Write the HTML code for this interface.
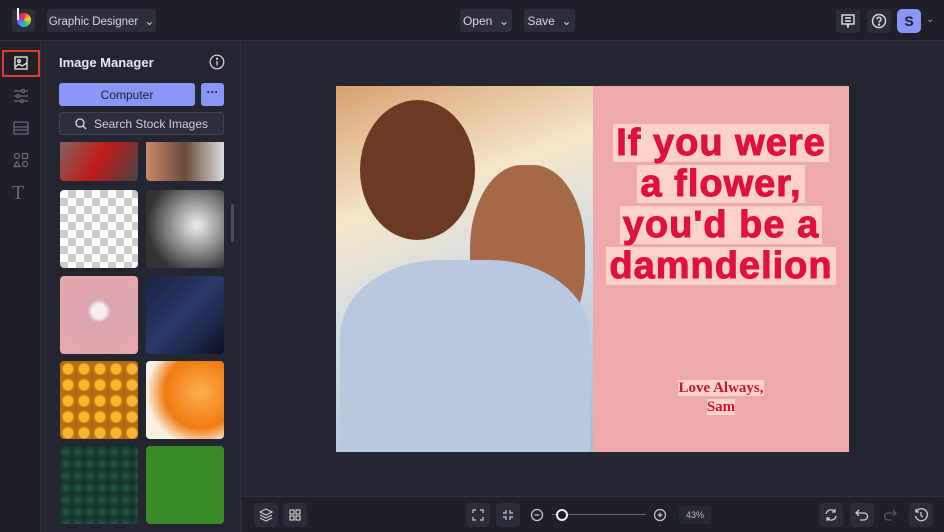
<!DOCTYPE html>
<html><head><style>
*{box-sizing:border-box;margin:0;padding:0}
body{width:944px;height:532px;overflow:hidden;background:#232530;font-family:"Liberation Sans",sans-serif;position:relative;color:#e6e6ea}
.abs{position:absolute}
.btn{position:absolute;background:#2c2e3a;border-radius:4px;font-size:12px;color:#d8d8de;display:flex;align-items:center;justify-content:center;white-space:nowrap}
.th{position:absolute;width:78px;height:78px;border-radius:4px}
.ib{position:absolute;width:24px;height:24px;background:#2a2c37;border-radius:4px;display:flex;align-items:center;justify-content:center}
.hl{background:#fdd3c8;color:#e0113e;font-weight:bold;font-size:38px;letter-spacing:1px;line-height:38px;padding:0 3px;display:inline-block;margin-bottom:3px;-webkit-text-stroke:1px #e0113e}
</style></head><body>
<div class="abs" style="left:0;top:0;width:944px;height:41px;background:#1e1f28;border-bottom:1px solid #2e303b"></div>
<div class="abs" style="left:12px;top:9px;width:23px;height:23px;background:#2c2e3a;border-radius:4px"></div>
<div class="abs" style="left:17px;top:13px;width:14px;height:14px;border-radius:50%;background:conic-gradient(#e33,#fc3,#3c6,#39f,#c3c,#e33)"></div>
<div class="abs" style="left:17px;top:8px;width:2px;height:12px;background:#fff"></div>
<div class="btn" style="left:47px;top:9px;width:109px;height:23px;font-size:11.5px">Graphic Designer&nbsp; ⌄</div>
<div class="btn" style="left:460px;top:9px;width:52px;height:23px">Open &nbsp;⌄</div>
<div class="btn" style="left:524px;top:9px;width:51px;height:23px">Save &nbsp;⌄</div>
<div class="ib" style="left:836px;top:9px"><svg width="14" height="14" viewBox="0 0 14 14" fill="none" stroke="#ddd" stroke-width="1.4"><rect x="1" y="1" width="12" height="9"/><path d="M4 4h6M4 7h6M6 10l1 3 1-3"/></svg></div>
<div class="ib" style="left:867px;top:9px"><svg width="16" height="16" viewBox="0 0 16 16" fill="none" stroke="#ddd" stroke-width="1.4"><circle cx="8" cy="8" r="6.5"/><path d="M6 6.3a2 2 0 1 1 2.5 2c-.5.2-.5.7-.5 1.3"/><circle cx="8" cy="11.6" r=".5" fill="#ddd"/></svg></div>
<div class="abs" style="left:897px;top:9px;width:24px;height:24px;background:#8b95f5;border-radius:5px;color:#1b1d2a;font-weight:bold;font-size:14px;display:flex;align-items:center;justify-content:center">S</div>
<div class="abs" style="left:926px;top:14px;font-size:10px;color:#aaa">⌄</div>

<div class="abs" style="left:0;top:42px;width:41px;height:490px;background:#1e1f28;border-right:1px solid #2e303b"></div>
<div class="abs" style="left:2px;top:50px;width:38px;height:27px;border:2px solid #e23a2a"></div>
<svg class="abs" style="left:14px;top:56px" width="14" height="14" viewBox="0 0 14 14" fill="none" stroke="#eee" stroke-width="1.3"><rect x="1" y="1" width="12" height="12"/><circle cx="5" cy="5" r="1.3"/><path d="M1 11l4-3 3 2 5-3"/></svg>
<svg class="abs" style="left:13px;top:88px" width="16" height="16" viewBox="0 0 16 16" fill="none" stroke="#666a78" stroke-width="1.2"><path d="M1 3h14M1 8h14M1 13h14"/><circle cx="10" cy="3" r="1.5" fill="#1e1f28"/><circle cx="5" cy="8" r="1.5" fill="#1e1f28"/><circle cx="9" cy="13" r="1.5" fill="#1e1f28"/></svg>
<svg class="abs" style="left:13px;top:120px" width="16" height="16" viewBox="0 0 16 16" fill="none" stroke="#666a78" stroke-width="1.2"><rect x="1" y="2" width="14" height="12"/><path d="M1 7h14M1 10h14"/></svg>
<svg class="abs" style="left:13px;top:152px" width="16" height="16" viewBox="0 0 16 16" fill="none" stroke="#666a78" stroke-width="1.2"><circle cx="4" cy="4" r="2.5"/><rect x="9.5" y="1.5" width="5" height="5"/><path d="M4 9.5l3 5H1z"/><circle cx="12" cy="12" r="2.5"/></svg>
<div class="abs" style="left:12px;top:182px;font-size:20px;color:#666a78;font-family:'Liberation Serif',serif">T</div>

<div class="abs" style="left:42px;top:42px;width:199px;height:490px;background:#232530;border-right:1px solid #2e303b"></div>
<div class="abs" style="left:59px;top:55px;font-size:13px;font-weight:bold;color:#e8e8ee">Image Manager</div>
<svg class="abs" style="left:209px;top:54px" width="16" height="16" viewBox="0 0 16 16" fill="none" stroke="#ddd" stroke-width="1.2"><circle cx="8" cy="8" r="6.8"/><path d="M8 7v4.5"/><circle cx="8" cy="4.7" r=".5" fill="#ddd"/></svg>
<div class="abs" style="left:59px;top:83px;width:136px;height:23px;background:#8b95f5;border-radius:3px;color:#1b1d3a;font-size:12px;display:flex;align-items:center;justify-content:center">Computer</div>
<div class="abs" style="left:201px;top:83px;width:23px;height:23px;background:#8b95f5;border-radius:3px;color:#1b1d3a;font-size:12px;font-weight:bold;text-align:center;line-height:18px">···</div>
<div class="abs" style="left:59px;top:112px;width:165px;height:23px;background:#2c2e3a;border:1px solid #42444f;border-radius:3px;font-size:12px;color:#cfd0d6;display:flex;align-items:center;justify-content:center"><svg width="12" height="12" viewBox="0 0 12 12" fill="none" stroke="#ddd" stroke-width="1.3" style="margin-right:7px"><circle cx="5" cy="5" r="4"/><path d="M8 8l3 3"/></svg>Search Stock Images</div>
<div class="abs" style="left:42px;top:142px;width:190px;height:390px;overflow:hidden">
<div class="th" style="left:18px;top:-4px;height:43px;background:linear-gradient(120deg,#7a6a60,#c21a1a 50%,#444)"></div>
<div class="th" style="left:104px;top:-4px;height:43px;background:linear-gradient(90deg,#c88a68,#6a4a3a,#ddd)"></div>
<div class="th" style="left:18px;top:48px;background:repeating-conic-gradient(#ccc 0 25%,#fff 0 50%) 0 0/16px 16px"></div>
<div class="th" style="left:104px;top:48px;background:radial-gradient(circle at 65% 45%,#eee,#999 35%,#333 75%)"></div>
<div class="th" style="left:18px;top:134px;background:radial-gradient(circle at 50% 45%,#f4f0f0 12%,#dba6b0 20%,#e8a6ae)"></div>
<div class="th" style="left:104px;top:134px;background:linear-gradient(135deg,#1a2040,#2a3a6a 50%,#0c1020)"></div>
<div class="th" style="left:18px;top:219px;background:radial-gradient(circle,#f6b830 40%,#b86a10 60%) 0 0/16px 16px"></div>
<div class="th" style="left:104px;top:219px;background:radial-gradient(circle at 70% 40%,#ffb050,#f07a10 50%,#f8f0e0 75%)"></div>
<div class="th" style="left:18px;top:304px;background:radial-gradient(circle,#2a5a4a,#0e2a22) 0 0/12px 12px"></div>
<div class="th" style="left:104px;top:304px;background:#3a8a2a"></div>
</div>
<div class="abs" style="left:231px;top:204px;width:3px;height:38px;background:#4a4c58;border-radius:2px"></div>

<div class="abs" style="left:336px;top:86px;width:257px;height:366px;overflow:hidden;background:linear-gradient(160deg,#d8a070 0%,#f5e6c8 30%,#d2dce8 55%,#a8b8d0 100%)">
<div class="abs" style="left:24px;top:14px;width:115px;height:140px;border-radius:50%;background:#6a3a22"></div>
<div class="abs" style="left:134px;top:79px;width:115px;height:185px;border-radius:45%;background:#a46a48"></div>
<div class="abs" style="left:4px;top:174px;width:250px;height:192px;border-radius:40% 40% 0 0;background:#b8c8de"></div>
</div>
<div class="abs" style="left:593px;top:86px;width:256px;height:366px;background:#eeaaaa"></div>
<div class="abs" style="left:593px;top:124px;width:256px;text-align:center">
<span class="hl">If you were</span><br><span class="hl">a flower,</span><br><span class="hl">you'd be a</span><br><span class="hl">damndelion</span></div>
<div class="abs" style="left:593px;top:379px;width:256px;text-align:center;font-family:'Liberation Serif',serif;font-weight:bold;font-size:15px;color:#d0103e;line-height:19px"><span style="background:#fdd3c8">Love Always,</span><br><span style="background:#fdd3c8">Sam</span></div>

<div class="abs" style="left:242px;top:496px;width:702px;height:36px;background:#1e1f28;border-top:1px solid #2e303b"></div>
<div class="ib" style="left:254px;top:503px"><svg width="14" height="14" viewBox="0 0 14 14" fill="none" stroke="#ccc" stroke-width="1.2"><path d="M7 1l6 3-6 3-6-3zM1 7l6 3 6-3M1 10l6 3 6-3"/></svg></div>
<div class="ib" style="left:283px;top:503px"><svg width="12" height="12" viewBox="0 0 12 12" fill="none" stroke="#ccc" stroke-width="1.2"><rect x="1" y="1" width="4" height="4"/><rect x="7" y="1" width="4" height="4"/><rect x="1" y="7" width="4" height="4"/><rect x="7" y="7" width="4" height="4"/></svg></div>
<div class="ib" style="left:466px;top:503px"><svg width="12" height="12" viewBox="0 0 12 12" fill="none" stroke="#ccc" stroke-width="1.2"><path d="M1 4V1h3M8 1h3v3M11 8v3H8M4 11H1V8"/></svg></div>
<div class="ib" style="left:496px;top:503px"><svg width="12" height="12" viewBox="0 0 12 12" fill="none" stroke="#ccc" stroke-width="1.2"><path d="M4 1v3H1M8 1v3h3M11 8H8v3M1 8h3v3"/></svg></div>
<svg class="abs" style="left:530px;top:508px" width="14" height="14" viewBox="0 0 14 14" fill="none" stroke="#ccc" stroke-width="1.2"><circle cx="7" cy="7" r="5.5"/><path d="M4.5 7h5"/></svg>
<div class="abs" style="left:552px;top:514px;width:94px;height:1px;background:#666"></div>
<div class="abs" style="left:556px;top:509px;width:12px;height:12px;border:2px solid #eee;border-radius:50%;background:#1e1f28"></div>
<svg class="abs" style="left:653px;top:508px" width="14" height="14" viewBox="0 0 14 14" fill="none" stroke="#ccc" stroke-width="1.2"><circle cx="7" cy="7" r="5.5"/><path d="M4.5 7h5M7 4.5v5"/></svg>
<div class="abs" style="left:679px;top:506px;width:32px;height:18px;background:#262833;border-radius:3px;font-size:9px;color:#bbb;text-align:center;line-height:18px">43%</div>
<div class="ib" style="left:819px;top:503px"><svg width="14" height="14" viewBox="0 0 14 14" fill="none" stroke="#ccc" stroke-width="1.3"><path d="M2 6a5 5 0 0 1 9-2M12 8a5 5 0 0 1-9 2M11 1v3H8M3 13v-3h3"/></svg></div>
<div class="ib" style="left:850px;top:503px"><svg width="14" height="14" viewBox="0 0 14 14" fill="none" stroke="#ccc" stroke-width="1.3"><path d="M4 2L1 5l3 3M1 5h8a3.5 3.5 0 0 1 0 7H5"/></svg></div>
<svg class="abs" style="left:883px;top:508px" width="14" height="14" viewBox="0 0 14 14" fill="none" stroke="#555" stroke-width="1.3"><path d="M10 2l3 3-3 3M13 5H5a3.5 3.5 0 0 0 0 7h4"/></svg>
<div class="ib" style="left:909px;top:503px"><svg width="14" height="14" viewBox="0 0 14 14" fill="none" stroke="#ccc" stroke-width="1.3"><path d="M2 4a6 6 0 1 1-.5 4M2 1v3h3M7 4v3.5l2 1.5"/></svg></div>
</body></html>
